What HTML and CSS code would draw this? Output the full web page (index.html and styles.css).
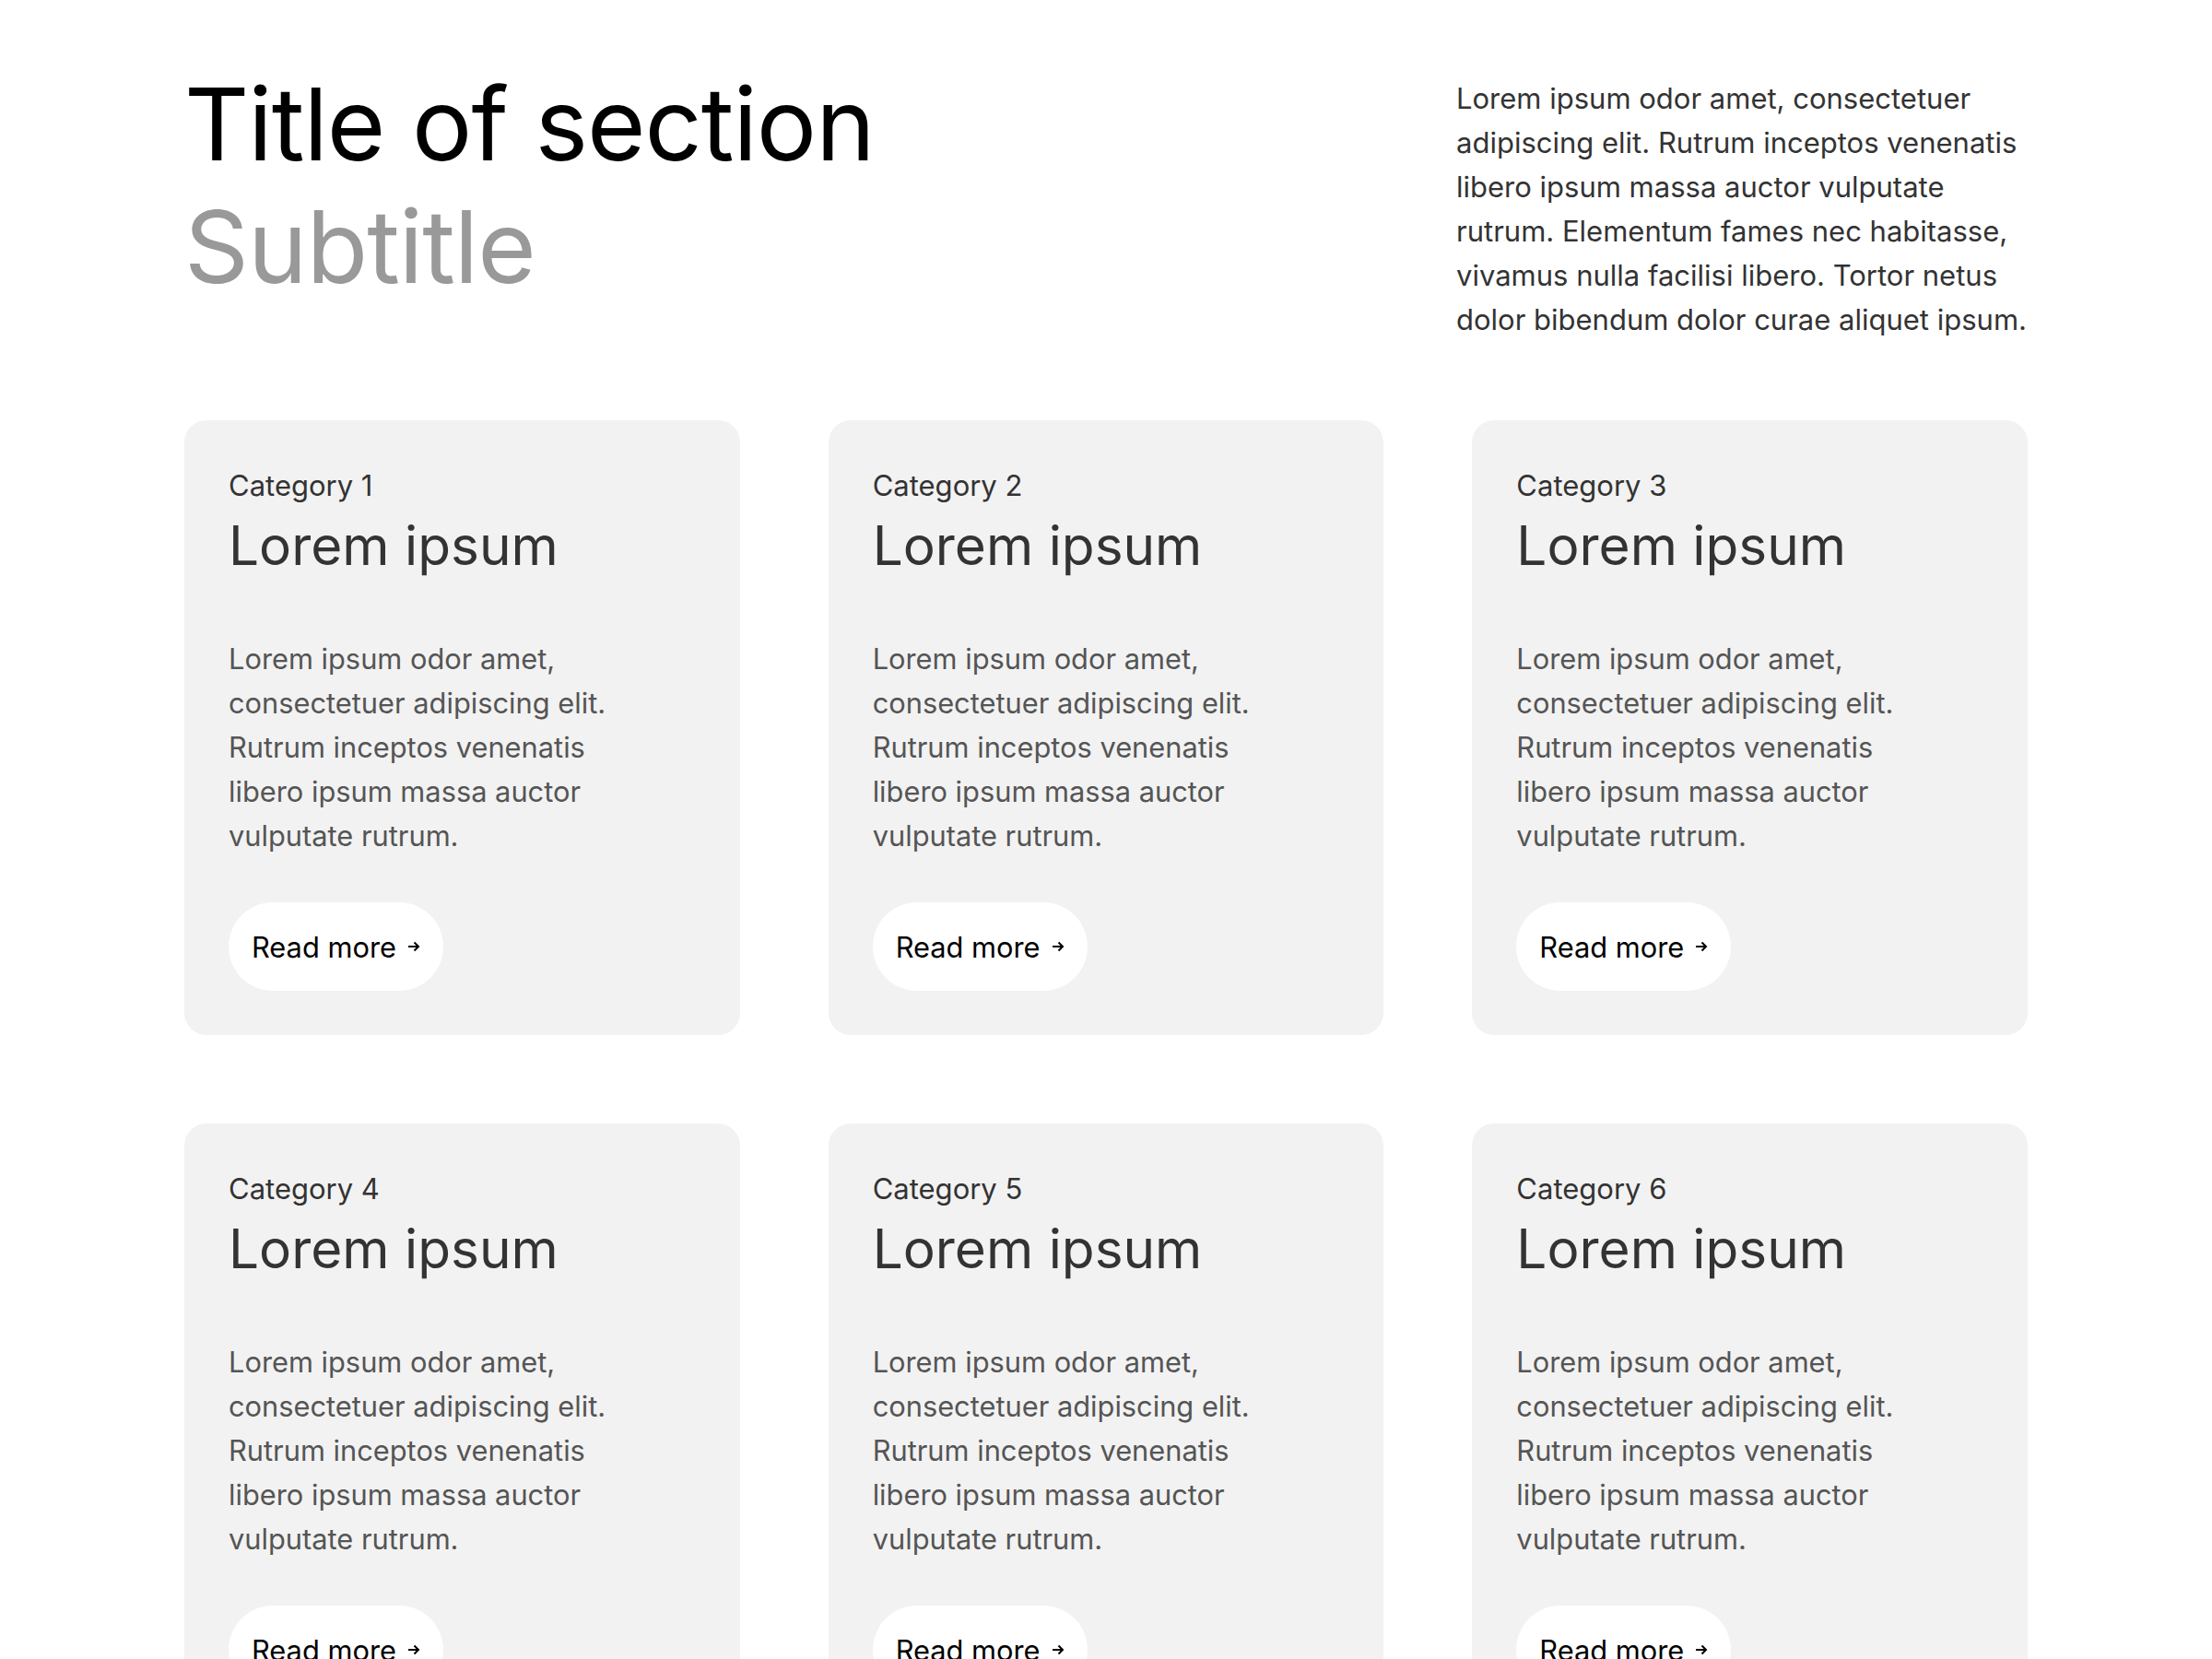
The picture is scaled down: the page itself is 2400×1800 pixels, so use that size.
FILE: index.html
```html
<!DOCTYPE html>
<html lang="en">
<head>
  <meta charset="UTF-8" />
  <meta name="viewport" content="width=device-width, initial-scale=1" />
  <title>Section</title>

  <link rel="stylesheet" href="styles.css">
</head>
<body>

  <section class="section">
    <header class="section-head">
      <div class="section-titles">
        <h1 class="section-title">Title of section</h1>
        <h2 class="section-subtitle">Subtitle</h2>
      </div>
      <p class="section-intro">Lorem ipsum odor amet, consectetuer adipiscing elit. Rutrum inceptos venenatis libero ipsum massa auctor vulputate rutrum. Elementum fames nec habitasse, vivamus nulla facilisi libero. Tortor netus dolor bibendum dolor curae aliquet ipsum.</p>
    </header>

    <div class="cards">
      <article class="card">
        <span class="card-category">Category 1</span>
        <h3 class="card-title">Lorem ipsum</h3>
        <p class="card-text">Lorem ipsum odor amet, consectetuer adipiscing elit. Rutrum inceptos venenatis libero ipsum massa auctor vulputate rutrum.</p>
        <a class="card-link" href="#">Read more
          <svg class="arrow" viewBox="0 0 14 12" width="14" height="12"><path d="M1 6h11M7.5 1.5L12 6l-4.5 4.5" /></svg>
        </a>
      </article>

      <article class="card">
        <span class="card-category">Category 2</span>
        <h3 class="card-title">Lorem ipsum</h3>
        <p class="card-text">Lorem ipsum odor amet, consectetuer adipiscing elit. Rutrum inceptos venenatis libero ipsum massa auctor vulputate rutrum.</p>
        <a class="card-link" href="#">Read more
          <svg class="arrow" viewBox="0 0 14 12" width="14" height="12"><path d="M1 6h11M7.5 1.5L12 6l-4.5 4.5" /></svg>
        </a>
      </article>

      <article class="card">
        <span class="card-category">Category 3</span>
        <h3 class="card-title">Lorem ipsum</h3>
        <p class="card-text">Lorem ipsum odor amet, consectetuer adipiscing elit. Rutrum inceptos venenatis libero ipsum massa auctor vulputate rutrum.</p>
        <a class="card-link" href="#">Read more
          <svg class="arrow" viewBox="0 0 14 12" width="14" height="12"><path d="M1 6h11M7.5 1.5L12 6l-4.5 4.5" /></svg>
        </a>
      </article>

      <article class="card">
        <span class="card-category">Category 4</span>
        <h3 class="card-title">Lorem ipsum</h3>
        <p class="card-text">Lorem ipsum odor amet, consectetuer adipiscing elit. Rutrum inceptos venenatis libero ipsum massa auctor vulputate rutrum.</p>
        <a class="card-link" href="#">Read more
          <svg class="arrow" viewBox="0 0 14 12" width="14" height="12"><path d="M1 6h11M7.5 1.5L12 6l-4.5 4.5" /></svg>
        </a>
      </article>

      <article class="card">
        <span class="card-category">Category 5</span>
        <h3 class="card-title">Lorem ipsum</h3>
        <p class="card-text">Lorem ipsum odor amet, consectetuer adipiscing elit. Rutrum inceptos venenatis libero ipsum massa auctor vulputate rutrum.</p>
        <a class="card-link" href="#">Read more
          <svg class="arrow" viewBox="0 0 14 12" width="14" height="12"><path d="M1 6h11M7.5 1.5L12 6l-4.5 4.5" /></svg>
        </a>
      </article>

      <article class="card">
        <span class="card-category">Category 6</span>
        <h3 class="card-title">Lorem ipsum</h3>
        <p class="card-text">Lorem ipsum odor amet, consectetuer adipiscing elit. Rutrum inceptos venenatis libero ipsum massa auctor vulputate rutrum.</p>
        <a class="card-link" href="#">Read more
          <svg class="arrow" viewBox="0 0 14 12" width="14" height="12"><path d="M1 6h11M7.5 1.5L12 6l-4.5 4.5" /></svg>
        </a>
      </article>
    </div>
  </section>

</body>
</html>
```

FILE: styles.css
```css
/* Page */
body {
  margin: 0;
  background: #fff;
  font-family: Inter, "Liberation Sans", sans-serif;
  color: #333;
}

.section {
  width: 2000px;
  margin: 0 auto;
  padding-top: 68px;
}

/* Heading row */
.section-head {
  display: flex;
  justify-content: space-between;
  align-items: flex-start;
}

.section-title,
.section-subtitle {
  margin: 0;
  font-size: 109px;
  font-weight: 400;
  line-height: 1.22;
  letter-spacing: -1px;
}

.section-title {
  color: #000;
}

.section-subtitle {
  color: #999;
}

.section-intro {
  width: 620px;
  margin: 15px 0 0;
  font-size: 31px;
  line-height: 48px;
  color: #333;
}

/* Cards grid */
.cards {
  display: grid;
  grid-template-columns: repeat(3, 1fr);
  gap: 96px;
  margin-top: 85px;
}

.card {
  display: flex;
  flex-direction: column;
  align-items: flex-start;
  padding: 48px;
  background: #f2f2f2;
  border-radius: 24px;
}

.card-category {
  font-size: 31px;
  line-height: 45px;
  color: #333;
}

.card-title {
  margin: 8px 0 0;
  font-size: 58.5px;
  font-weight: 400;
  line-height: 1.2;
  color: #333;
}

.card-text {
  margin: 64px 0 0;
  max-width: 450px;
  font-size: 30.8px;
  line-height: 48px;
  color: #555;
}

.card-link {
  display: inline-flex;
  align-items: center;
  gap: 12px;
  height: 96px;
  margin-top: 48px;
  padding: 0 25px;
  border-radius: 48px;
  background: #fff;
  color: #000;
  font-size: 30.8px;
  text-decoration: none;
}

.arrow {
  fill: none;
  stroke: #000;
  stroke-width: 2;
}
```
